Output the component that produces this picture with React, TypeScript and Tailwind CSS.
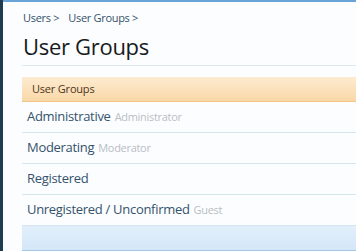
const rows = [
  { name: "Administrative", hint: "Administrator" },
  { name: "Moderating", hint: "Moderator" },
  { name: "Registered", hint: "" },
  { name: "Unregistered / Unconfirmed", hint: "Guest" },
];

const App = () => {
  return (
    <div
      className="w-[356px] h-[251px] overflow-hidden flex bg-[#fcfdff]"
      style={{ fontFamily: "'Open Sans', 'DejaVu Sans', sans-serif" }}
    >
      <div className="w-[3px] shrink-0 bg-[#1e3b4f]"></div>

      <div className="flex-1 flex flex-col border-t-2 border-[#6aa3d6]">
        <div className="pl-[19px]">
          <div className="pt-[9px] pl-[1px] text-[11px] leading-[14px] text-[#34526a] tracking-[-0.3px]">
            <span>Users &gt;</span>
            <span className="ml-[9px]">User Groups &gt;</span>
          </div>
          <h1 className="mt-[8px] pl-[1px] text-[22px] leading-[26px] text-[#161b20] tracking-[-0.3px]">
            User Groups
          </h1>
          <div className="mt-[6px] h-px bg-[#dde8f0]"></div>

          <div className="mt-[11px] h-[25px] flex items-center pl-[10px] text-[11px] text-[#4b3520] bg-gradient-to-b from-[#fdebd0] to-[#f9d8a8] border-b border-[#f4c489] tracking-[-0.2px]">
            User Groups
          </div>

          {rows.map((row) => (
            <div
              key={row.name}
              className="h-[31px] flex items-center pl-[5px] border-b border-[#d7e5ee] text-[13px] tracking-[-0.3px]"
            >
              <span className="text-[#34526c]">{row.name}</span>
              {row.hint && (
                <span className="ml-[4px] text-[11px] text-[#b9bec4]">{row.hint}</span>
              )}
            </div>
          ))}

          <div className="h-[25px] bg-gradient-to-b from-[#e2effb] to-[#d3e7f8] border-b border-[#a8c6e4]"></div>
        </div>
      </div>
    </div>
  );
};

export default App;
